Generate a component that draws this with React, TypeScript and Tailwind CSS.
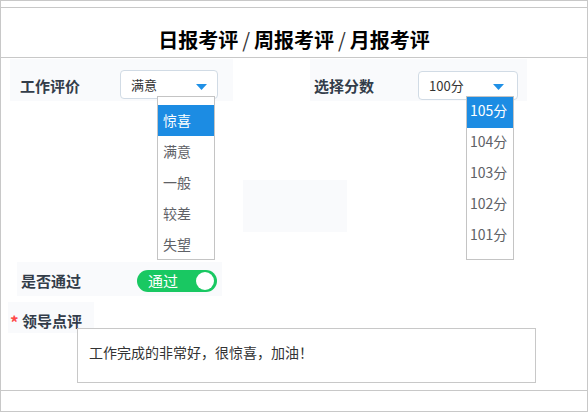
import React from "react";

const font = "font-['Noto_Sans_CJK_SC','Noto_Sans',sans-serif]";

const Caret = () => (
  <svg width="11" height="6" viewBox="0 0 11 6" className="absolute">
    <path d="M0 0h11L5.5 6z" fill="#2090e6" />
  </svg>
);

const workOptions = ["惊喜", "满意", "一般", "较差", "失望"];
const scoreOptions = ["105分", "104分", "103分", "102分", "101分"];

const Slash = () => <span className="mx-[4px] font-normal text-[#333]">/</span>;

export default function App() {
  return (
    <div
      className={`${font} w-[588px] h-[412px] border border-[#c8c8c8] bg-white flex flex-col overflow-hidden`}
    >
      <div className="h-[6px]" />
      <div className="h-[51px] border-y border-[#c8c8c8] pt-[22px] text-center text-[20px] leading-[20px] font-bold text-black">
        日报考评
        <Slash />
        周报考评
        <Slash />
        月报考评
      </div>

      <div className="flex-1 flex flex-col">
        {/* row 1 */}
        <div className="mt-[1px] flex h-[42px]">
          <div className="ml-[9px] w-[223px] bg-[#f9fafc] flex items-start pt-[11px] pl-[10px]">
            <div className="w-[100px] mt-[1px] text-[15px] leading-[29px] font-bold text-[#333d4a]">
              工作评价
            </div>
            <div className="relative w-[98px] h-[29px] border border-[#d1dbe5] rounded-[4px] bg-white pl-[10px] text-[13px] leading-[27px] text-[#333]">
              满意
              <div className="absolute left-[75px] top-[13px]">
                <Caret />
              </div>
              <div className="absolute left-[36px] top-[25px] w-[58px] h-[164px] border border-[#c4c4c4] bg-white pt-[8px] z-10">
                {workOptions.map((o, i) => (
                  <div
                    key={o}
                    className={`h-[31px] pl-[5px] text-[14px] leading-[31px] ${
                      i === 0 ? "bg-[#1c8ce3] text-white" : "text-[#5e6166]"
                    }`}
                  >
                    {o}
                  </div>
                ))}
              </div>
            </div>
          </div>

          <div className="ml-[77px] w-[217px] bg-[#f9fafc] flex items-start pt-[12px] pl-[4px]">
            <div className="w-[104px] text-[15px] leading-[29px] font-bold text-[#333d4a]">
              选择分数
            </div>
            <div className="relative w-[100px] h-[29px] border border-[#d1dbe5] rounded-[4px] bg-white pl-[10px] text-[13px] leading-[27px] text-[#333]">
              100分
              <div className="absolute left-[74px] top-[12px]">
                <Caret />
              </div>
              <div className="absolute left-[47px] top-[24px] w-[48px] h-[164px] border border-[#c4c4c4] bg-white z-10">
                {scoreOptions.map((o, i) => (
                  <div
                    key={o}
                    className={`h-[31px] pl-[3px] text-[14px] leading-[27px] ${
                      i === 0 ? "bg-[#1c8ce3] text-white" : "text-[#5e6166]"
                    }`}
                  >
                    {o}
                  </div>
                ))}
              </div>
            </div>
          </div>
        </div>

        <div className="mt-[79px] ml-[242px] w-[104px] h-[52px] bg-[#f9fafc]" />

        {/* row 3 */}
        <div className="mt-[30px] ml-[16px] w-[205px] h-[34px] bg-[#f9fafc] flex items-start pt-[8px] pl-[4px]">
          <div className="w-[116px] text-[15px] leading-[22px] font-bold text-[#333d4a]">
            是否通过
          </div>
          <div className="relative w-[80px] h-[22px] rounded-full bg-[#19c862] pl-[11px] text-[15px] leading-[22px] text-white">
            通过
            <div className="absolute right-[3px] top-[2px] w-[18px] h-[18px] rounded-full bg-white" />
          </div>
        </div>

        {/* row 4 */}
        <div className="mt-[6px] ml-[7px] w-[86px] h-[31px] bg-[#f9fafc] flex items-start pt-[9px] pl-[2px]">
          <span className="w-[12px] pt-[2px] text-[17px] leading-[17px] font-bold text-[#ff4949]">*</span>
          <span className="text-[15px] leading-[20px] font-bold text-[#333d4a]">领导点评</span>
        </div>
        <div className="-mt-[5px] ml-[76px] w-[459px] h-[55px] border border-[#c8c8c8] bg-white pl-[11px] pt-[14px] text-[14px] leading-[18px] text-[#333]">
          工作完成的非常好，很惊喜，加油！
        </div>
      </div>

      <div className="h-[21px] border-t border-[#c8c8c8]" />
    </div>
  );
}
